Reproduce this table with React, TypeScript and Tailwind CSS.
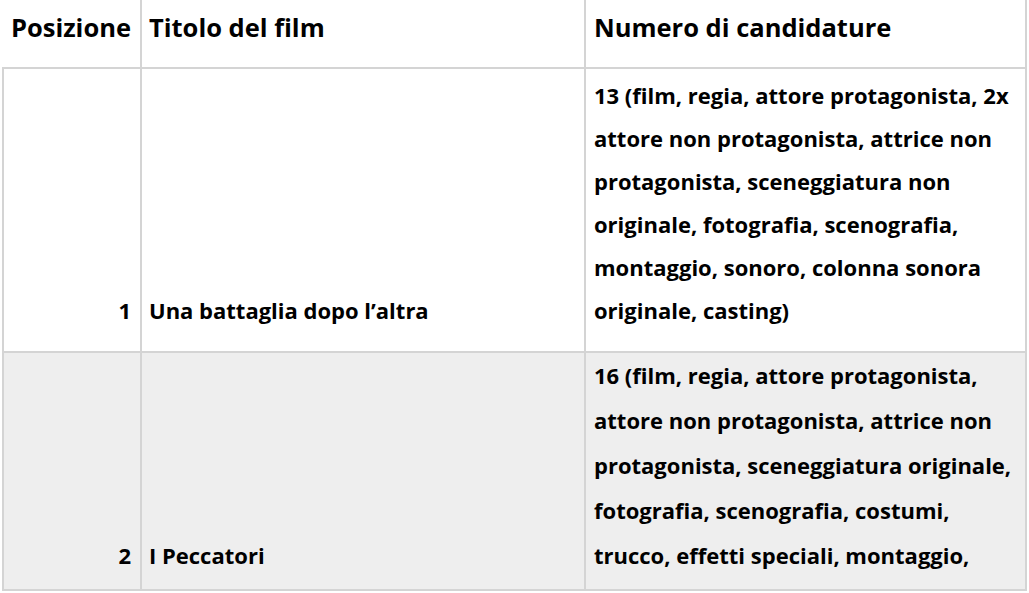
const rows = [
  {
    pos: "1",
    title: "Una battaglia dopo l’altra",
    noms: "13 (film, regia, attore protagonista, 2x attore non protagonista, attrice non protagonista, sceneggiatura non originale, fotografia, scenografia, montaggio, sonoro, colonna sonora originale, casting)",
    cell: "pt-[5px] pb-[19px] leading-[43px]",
  },
  {
    pos: "2",
    title: "I Peccatori",
    noms: "16 (film, regia, attore protagonista, attore non protagonista, attrice non protagonista, sceneggiatura originale, fotografia, scenografia, costumi, trucco, effetti speciali, montaggio,",
    cell: "pt-0 pb-[11px] leading-[45px]",
  },
];

export default function App() {
  return (
    <div className="h-[593px] overflow-hidden bg-white pl-[2px] font-['Open_Sans',sans-serif] font-bold text-black">
      <table className="w-[1025px] table-fixed border-collapse">
        <colgroup>
          <col className="w-[138px]" />
          <col className="w-[444px]" />
          <col />
        </colgroup>
        <thead>
          <tr className="h-[68px] text-[25.5px]">
            <th className="border-2 border-t-0 border-l-0 border-[#d4d4d4] pr-[9px] pb-[12px] text-right align-middle">
              Posizione
            </th>
            <th className="border-2 border-t-0 border-[#d4d4d4] pl-[7px] pb-[12px] text-left align-middle">
              Titolo del film
            </th>
            <th className="border-2 border-t-0 border-[#d4d4d4] pl-[8px] pb-[12px] text-left align-middle">
              Numero di candidature
            </th>
          </tr>
        </thead>
        <tbody>
          {rows.map((r, i) => (
            <tr key={r.pos} className={i % 2 ? "bg-[#eeeeee]" : "bg-white"}>
              <td className={`border-2 border-[#d4d4d4] pr-[9px] text-right align-bottom text-[22px] ${r.cell}`}>
                {r.pos}
              </td>
              <td className={`border-2 border-[#d4d4d4] pl-[7px] align-bottom text-[22px] ${r.cell}`}>
                {r.title}
              </td>
              <td className={`border-2 border-[#d4d4d4] pl-[8px] pr-[6px] align-bottom text-[22px] ${r.cell}`}>
                {r.noms}
              </td>
            </tr>
          ))}
        </tbody>
      </table>
    </div>
  );
}
